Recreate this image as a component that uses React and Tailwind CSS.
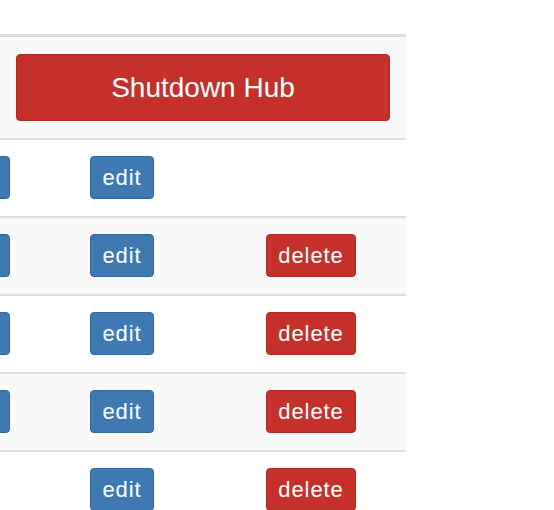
import React from 'react';

const rows = [
  { del: false },
  { del: true },
  { del: true },
  { del: true },
  { del: true },
];

function Btn({ kind, children, className = '' }) {
  const color =
    kind === 'danger'
      ? 'bg-[#c5302b] border-[#ad2a25]'
      : 'bg-[#3f79b2] border-[#336699]';
  return (
    <button
      className={`block h-[43px] rounded-[4px] border text-white text-[22px] tracking-[0.9px] leading-none ${color} ${className}`}
    >
      {children}
    </button>
  );
}

export default function App() {
  return (
    <div className="w-[554px] h-[510px] bg-white overflow-hidden" style={{ fontFamily: '"Liberation Sans", Arial, sans-serif' }}>
      <div className="pt-[34px] w-[406px] overflow-hidden">
        <div className="border-t-[3px] border-[#dddddd]">
          {/* Shutdown row */}
          <div className="bg-[#f9f9f9] px-4 pt-[17px] pb-[17px] border-b-2 border-[#dddddd]">
            <button className="block w-full h-[67px] rounded-[4px] border border-[#ad2a25] bg-[#c5302b] text-white text-[28px] leading-none">
              Shutdown Hub
            </button>
          </div>

          {/* Item rows */}
          {rows.map((r, i) => (
            <div
              key={i}
              className={`ml-[-70px] w-[476px] h-[78px] grid grid-cols-[144px_176px_156px] border-b-2 border-[#dddddd] ${
                i % 2 === 1 ? 'bg-[#f9f9f9]' : 'bg-white'
              }`}
            >
              <div className="pl-4 pt-4">
                {i < 4 && <Btn className="w-[64px]" />}
              </div>
              <div className="pl-4 pt-4">
                <Btn className="w-[64px]">edit</Btn>
              </div>
              <div className="pl-4 pt-4">
                {r.del && (
                  <Btn kind="danger" className="w-[90px]">
                    delete
                  </Btn>
                )}
              </div>
            </div>
          ))}
        </div>
      </div>
    </div>
  );
}
